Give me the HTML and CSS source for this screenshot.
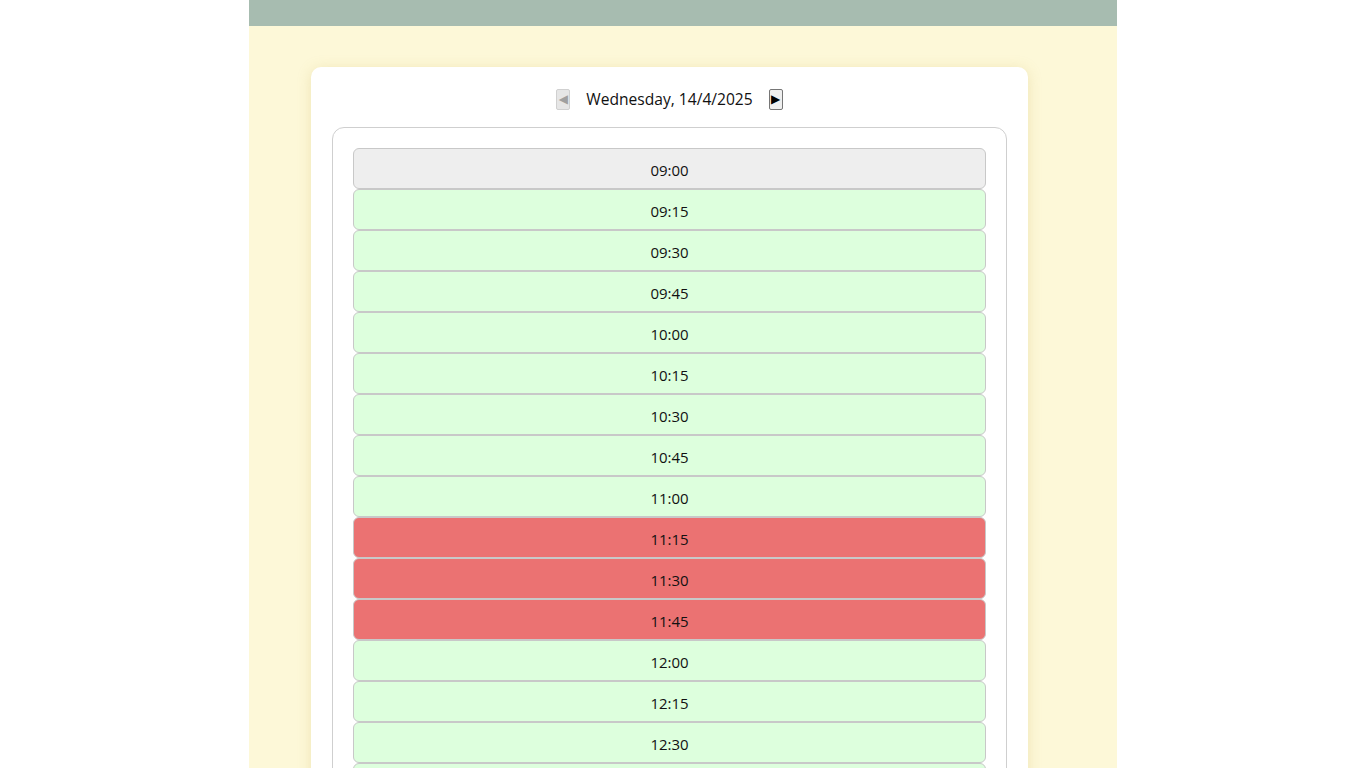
FILE: index.html
```html
<!DOCTYPE html>
<html>
<head>
<meta charset="utf-8">
<link rel="stylesheet" href="styles.css">
</head>
<body>
<div class="page">
  <div class="topbar"></div>
  <main class="content">
    <section class="card">
      <div class="datenav">
        <button class="navbtn" disabled>&#9664;</button>
        <span class="date">Wednesday, 14/4/2025</span>
        <button class="navbtn next">&#9654;</button>
      </div>
      <div class="slots">
        <div class="slot past">09:00</div>
        <div class="slot free">09:15</div>
        <div class="slot free">09:30</div>
        <div class="slot free">09:45</div>
        <div class="slot free">10:00</div>
        <div class="slot free">10:15</div>
        <div class="slot free">10:30</div>
        <div class="slot free">10:45</div>
        <div class="slot free">11:00</div>
        <div class="slot busy">11:15</div>
        <div class="slot busy">11:30</div>
        <div class="slot busy">11:45</div>
        <div class="slot free">12:00</div>
        <div class="slot free">12:15</div>
        <div class="slot free">12:30</div>
        <div class="slot free">12:45</div>
        <div class="slot free">13:00</div>
      </div>
    </section>
  </main>
</div>
</body>
</html>
```
FILE: styles.css
```css
html, body {
  margin: 0;
  padding: 0;
  background: #ffffff;
  font-family: "Open Sans", "Noto Sans", sans-serif;
  color: #111;
  overflow: hidden;
  height: 768px;
}
.page {
  width: 868px;
  margin: 0 auto 0 249px;
  background: #fdf8d8;
  min-height: 768px;
}
.topbar {
  height: 26px;
  background: #a7bcb0;
}
.content {
  padding-top: 41px;
  padding-left: 62px;
}
.card {
  width: 717px;
  box-sizing: border-box;
  background: #fff;
  border-radius: 10px;
  box-shadow: 0 2px 14px rgba(200, 180, 90, 0.28);
  padding: 21px 21px 40px;
}
.datenav {
  display: flex;
  justify-content: center;
  align-items: center;
  height: 22px;
  margin-bottom: 17px;
}
.navbtn {
  width: 14px;
  height: 21px;
  padding: 0;
  font-size: 12px;
  line-height: 19px;
  border: 1px solid #767676;
  background: #efefef;
  color: #000;
  border-radius: 2px;
  font-family: "DejaVu Sans", sans-serif;
}
.navbtn[disabled] {
  color: #a0a0a0;
  border-color: #d0d0d0;
  background: #e6e6e6;
}
.date {
  font-size: 15.6px;
  margin: 0 16px 0 16px;
}
.slots {
  border: 1px solid #cfcfcf;
  border-radius: 12px;
  padding: 20px;
  display: flex;
  flex-direction: column;
}
.slot {
  height: 39px;
  border: 1px solid #c8c8c8;
  border-radius: 6px;
  display: flex;
  align-items: center;
  justify-content: center;
  font-size: 15px;
  padding-top: 2px;
  box-sizing: border-box;
  height: 41px;
}
.past { background: #eeeeee; }
.free { background: #ddffdd; }
.busy { background: #eb7272; }
```
